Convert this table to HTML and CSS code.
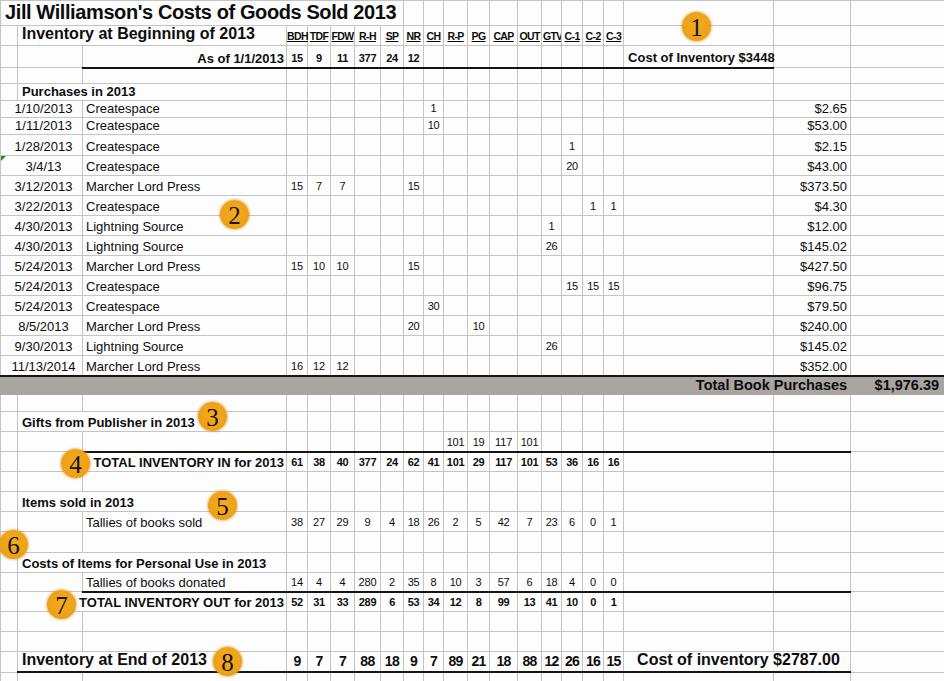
FILE: index.html
```html
<!DOCTYPE html>
<html>
<head>
<meta charset="utf-8">
<title>Jill Williamson's Costs of Goods Sold 2013</title>
<link rel="stylesheet" href="styles.css">
</head>
<body>
<div class="sheet">
<table class="grid">
<colgroup>
<col style="width:17px"><col style="width:65px"><col style="width:204px">
<col style="width:21px"><col style="width:23px"><col style="width:24px"><col style="width:26px"><col style="width:23px"><col style="width:20px"><col style="width:20px"><col style="width:24px"><col style="width:22px"><col style="width:28px"><col style="width:24px"><col style="width:20px"><col style="width:21px"><col style="width:21px"><col style="width:20px">
<col style="width:150px"><col style="width:77px"><col style="width:94px">
</colgroup>
<tbody>
<tr class="h25"><td colspan="8" class="title">Jill Williamson's Costs of Goods Sold 2013</td><td></td><td></td><td></td><td></td><td></td><td></td><td></td><td></td><td></td><td></td><td></td><td></td><td></td></tr>
<tr class="h20"><td></td><td colspan="2" class="big">Inventory at Beginning of 2013</td><td class="hd">BDH</td><td class="hd">TDF</td><td class="hd">FDW</td><td class="hd">R-H</td><td class="hd">SP</td><td class="hd">NR</td><td class="hd">CH</td><td class="hd">R-P</td><td class="hd">PG</td><td class="hd">CAP</td><td class="hd">OUT</td><td class="hd clip">GTV</td><td class="hd">C-1</td><td class="hd">C-2</td><td class="hd">C-3</td><td></td><td></td><td></td></tr>
<tr class="h22"><td></td><td></td><td class="lbl-r tb">As of 1/1/2013</td><td class="nb tb">15</td><td class="nb tb">9</td><td class="nb tb">11</td><td class="nb tb">377</td><td class="nb tb">24</td><td class="nb tb">12</td><td class="tb"></td><td class="tb"></td><td class="tb"></td><td class="tb"></td><td class="tb"></td><td class="tb"></td><td class="tb"></td><td class="tb"></td><td class="tb"></td><td class="costinv tb">Cost of Inventory $3448</td><td></td><td></td></tr>
<tr class="h16"><td></td><td></td><td></td><td></td><td></td><td></td><td></td><td></td><td></td><td></td><td></td><td></td><td></td><td></td><td></td><td></td><td></td><td></td><td></td><td></td><td></td></tr>
<tr class="h17"><td></td><td colspan="2" class="sec">Purchases in 2013</td><td></td><td></td><td></td><td></td><td></td><td></td><td></td><td></td><td></td><td></td><td></td><td></td><td></td><td></td><td></td><td></td><td></td><td></td></tr>
<tr class="h17"><td colspan="2" class="date">1/10/2013</td><td class="ven">Createspace</td><td></td><td></td><td></td><td></td><td></td><td></td><td class="n">1</td><td></td><td></td><td></td><td></td><td></td><td></td><td></td><td></td><td></td><td class="money">$2.65</td><td></td></tr>
<tr class="h17"><td colspan="2" class="date">1/11/2013</td><td class="ven">Createspace</td><td></td><td></td><td></td><td></td><td></td><td></td><td class="n">10</td><td></td><td></td><td></td><td></td><td></td><td></td><td></td><td></td><td></td><td class="money">$53.00</td><td></td></tr>
<tr class="h21"><td colspan="2" class="date">1/28/2013</td><td class="ven">Createspace</td><td></td><td></td><td></td><td></td><td></td><td></td><td></td><td></td><td></td><td></td><td></td><td></td><td class="n">1</td><td></td><td></td><td></td><td class="money">$2.15</td><td></td></tr>
<tr class="h20"><td colspan="2" class="date flag">3/4/13</td><td class="ven">Createspace</td><td></td><td></td><td></td><td></td><td></td><td></td><td></td><td></td><td></td><td></td><td></td><td></td><td class="n">20</td><td></td><td></td><td></td><td class="money">$43.00</td><td></td></tr>
<tr class="h20"><td colspan="2" class="date">3/12/2013</td><td class="ven">Marcher Lord Press</td><td class="n">15</td><td class="n">7</td><td class="n">7</td><td></td><td></td><td class="n">15</td><td></td><td></td><td></td><td></td><td></td><td></td><td></td><td></td><td></td><td></td><td class="money">$373.50</td><td></td></tr>
<tr class="h20"><td colspan="2" class="date">3/22/2013</td><td class="ven">Createspace</td><td></td><td></td><td></td><td></td><td></td><td></td><td></td><td></td><td></td><td></td><td></td><td></td><td></td><td class="n">1</td><td class="n">1</td><td></td><td class="money">$4.30</td><td></td></tr>
<tr class="h20"><td colspan="2" class="date">4/30/2013</td><td class="ven">Lightning Source</td><td></td><td></td><td></td><td></td><td></td><td></td><td></td><td></td><td></td><td></td><td></td><td class="n">1</td><td></td><td></td><td></td><td></td><td class="money">$12.00</td><td></td></tr>
<tr class="h20"><td colspan="2" class="date">4/30/2013</td><td class="ven">Lightning Source</td><td></td><td></td><td></td><td></td><td></td><td></td><td></td><td></td><td></td><td></td><td></td><td class="n">26</td><td></td><td></td><td></td><td></td><td class="money">$145.02</td><td></td></tr>
<tr class="h20"><td colspan="2" class="date">5/24/2013</td><td class="ven">Marcher Lord Press</td><td class="n">15</td><td class="n">10</td><td class="n">10</td><td></td><td></td><td class="n">15</td><td></td><td></td><td></td><td></td><td></td><td></td><td></td><td></td><td></td><td></td><td class="money">$427.50</td><td></td></tr>
<tr class="h20"><td colspan="2" class="date">5/24/2013</td><td class="ven">Createspace</td><td></td><td></td><td></td><td></td><td></td><td></td><td></td><td></td><td></td><td></td><td></td><td></td><td class="n">15</td><td class="n">15</td><td class="n">15</td><td></td><td class="money">$96.75</td><td></td></tr>
<tr class="h20"><td colspan="2" class="date">5/24/2013</td><td class="ven">Createspace</td><td></td><td></td><td></td><td></td><td></td><td></td><td class="n">30</td><td></td><td></td><td></td><td></td><td></td><td></td><td></td><td></td><td></td><td class="money">$79.50</td><td></td></tr>
<tr class="h20"><td colspan="2" class="date">8/5/2013</td><td class="ven">Marcher Lord Press</td><td></td><td></td><td></td><td></td><td></td><td class="n">20</td><td></td><td></td><td class="n">10</td><td></td><td></td><td></td><td></td><td></td><td></td><td></td><td class="money">$240.00</td><td></td></tr>
<tr class="h20"><td colspan="2" class="date">9/30/2013</td><td class="ven">Lightning Source</td><td></td><td></td><td></td><td></td><td></td><td></td><td></td><td></td><td></td><td></td><td></td><td class="n">26</td><td></td><td></td><td></td><td></td><td class="money">$145.02</td><td></td></tr>
<tr class="h20"><td colspan="2" class="date">11/13/2014</td><td class="ven">Marcher Lord Press</td><td class="n">16</td><td class="n">12</td><td class="n">12</td><td></td><td></td><td></td><td></td><td></td><td></td><td></td><td></td><td></td><td></td><td></td><td></td><td></td><td class="money">$352.00</td><td></td></tr>
<tr class="h19 band"><td colspan="18"></td><td colspan="2" class="tot">Total Book Purchases</td><td class="totv">$1,976.39</td></tr>
<tr class="h17"><td></td><td></td><td></td><td></td><td></td><td></td><td></td><td></td><td></td><td></td><td></td><td></td><td></td><td></td><td></td><td></td><td></td><td></td><td></td><td></td><td></td></tr>
<tr class="h20"><td></td><td colspan="2" class="sec">Gifts from Publisher in 2013</td><td></td><td></td><td></td><td></td><td></td><td></td><td></td><td></td><td></td><td></td><td></td><td></td><td></td><td></td><td></td><td></td><td></td><td></td></tr>
<tr class="h20"><td></td><td></td><td class="tb"></td><td class="tb"></td><td class="tb"></td><td class="tb"></td><td class="tb"></td><td class="tb"></td><td class="tb"></td><td class="tb"></td><td class="n tb">101</td><td class="n tb">19</td><td class="n tb">117</td><td class="n tb">101</td><td class="tb"></td><td class="tb"></td><td class="tb"></td><td class="tb"></td><td class="tb"></td><td class="tb"></td><td></td></tr>
<tr class="h20"><td></td><td></td><td class="lbl-r">TOTAL INVENTORY IN for 2013</td><td class="nb">61</td><td class="nb">38</td><td class="nb">40</td><td class="nb">377</td><td class="nb">24</td><td class="nb">62</td><td class="nb">41</td><td class="nb">101</td><td class="nb">29</td><td class="nb">117</td><td class="nb">101</td><td class="nb">53</td><td class="nb">36</td><td class="nb">16</td><td class="nb">16</td><td></td><td></td><td></td></tr>
<tr class="h20"><td></td><td></td><td></td><td></td><td></td><td></td><td></td><td></td><td></td><td></td><td></td><td></td><td></td><td></td><td></td><td></td><td></td><td></td><td></td><td></td><td></td></tr>
<tr class="h20"><td></td><td colspan="2" class="sec">Items sold in 2013</td><td></td><td></td><td></td><td></td><td></td><td></td><td></td><td></td><td></td><td></td><td></td><td></td><td></td><td></td><td></td><td></td><td></td><td></td></tr>
<tr class="h20"><td></td><td></td><td class="ven">Tallies of books sold</td><td class="n">38</td><td class="n">27</td><td class="n">29</td><td class="n">9</td><td class="n">4</td><td class="n">18</td><td class="n">26</td><td class="n">2</td><td class="n">5</td><td class="n">42</td><td class="n">7</td><td class="n">23</td><td class="n">6</td><td class="n">0</td><td class="n">1</td><td></td><td></td><td></td></tr>
<tr class="h21"><td></td><td></td><td></td><td></td><td></td><td></td><td></td><td></td><td></td><td></td><td></td><td></td><td></td><td></td><td></td><td></td><td></td><td></td><td></td><td></td><td></td></tr>
<tr class="h20"><td></td><td colspan="2" class="sec">Costs of Items for Personal Use in 2013</td><td></td><td></td><td></td><td></td><td></td><td></td><td></td><td></td><td></td><td></td><td></td><td></td><td></td><td></td><td></td><td></td><td></td><td></td></tr>
<tr class="h19"><td></td><td></td><td class="ven tb">Tallies of books donated</td><td class="n tb">14</td><td class="n tb">4</td><td class="n tb">4</td><td class="n tb">280</td><td class="n tb">2</td><td class="n tb">35</td><td class="n tb">8</td><td class="n tb">10</td><td class="n tb">3</td><td class="n tb">57</td><td class="n tb">6</td><td class="n tb">18</td><td class="n tb">4</td><td class="n tb">0</td><td class="n tb">0</td><td class="tb"></td><td class="tb"></td><td></td></tr>
<tr class="h20"><td></td><td colspan="2" class="lbl-r">TOTAL INVENTORY OUT for 2013</td><td class="nb">52</td><td class="nb">31</td><td class="nb">33</td><td class="nb">289</td><td class="nb">6</td><td class="nb">53</td><td class="nb">34</td><td class="nb">12</td><td class="nb">8</td><td class="nb">99</td><td class="nb">13</td><td class="nb">41</td><td class="nb">10</td><td class="nb">0</td><td class="nb">1</td><td></td><td></td><td></td></tr>
<tr class="h20"><td></td><td></td><td></td><td></td><td></td><td></td><td></td><td></td><td></td><td></td><td></td><td></td><td></td><td></td><td></td><td></td><td></td><td></td><td></td><td></td><td></td></tr>
<tr class="h20"><td></td><td></td><td></td><td></td><td></td><td></td><td></td><td></td><td></td><td></td><td></td><td></td><td></td><td></td><td></td><td></td><td></td><td></td><td></td><td></td><td></td></tr>
<tr class="h20"><td></td><td colspan="2" class="big tb">Inventory at End of 2013</td><td class="ne tb">9</td><td class="ne tb">7</td><td class="ne tb">7</td><td class="ne tb">88</td><td class="ne tb">18</td><td class="ne tb">9</td><td class="ne tb">7</td><td class="ne tb">89</td><td class="ne tb">21</td><td class="ne tb">18</td><td class="ne tb">88</td><td class="ne tb">12</td><td class="ne tb">26</td><td class="ne tb">16</td><td class="ne tb">15</td><td colspan="2" class="big costend tb">Cost of inventory $2787.00</td><td></td></tr>
<tr class="h20"><td></td><td></td><td></td><td></td><td></td><td></td><td></td><td></td><td></td><td></td><td></td><td></td><td></td><td></td><td></td><td></td><td></td><td></td><td></td><td></td><td></td></tr>
</tbody>
</table>

<span class="badge b1">1</span>
<span class="badge b2">2</span>
<span class="badge b3">3</span>
<span class="badge b4">4</span>
<span class="badge b5">5</span>
<span class="badge b6">6</span>
<span class="badge b7">7</span>
<span class="badge b8">8</span>
</div>
</body>
</html>
```

FILE: styles.css
```css
* { box-sizing: border-box; }
html, body { margin: 0; padding: 0; background: #fdfdfd; }
body { font-family: "Liberation Sans", Arial, sans-serif; color: #0d0d0d; }

.sheet { position: relative; width: 944px; height: 681px; overflow: hidden; }

.grid { border-collapse: collapse; table-layout: fixed; width: 944px; }
.grid td {
  border: 1px solid #c4c4c4;
  padding: 0 3px 2px 3px;
  vertical-align: bottom;
  white-space: nowrap;
  font-size: 13px;
  line-height: 1;
}

.h16 { height: 16px; }
.h17 { height: 17px; }
.h19 { height: 19px; }
.h20 { height: 20px; }
.h21 { height: 21px; }
.h22 { height: 22px; }
.h25 { height: 25px; }

.grid td.title { font-size: 20px; font-weight: bold; letter-spacing: -0.4px; padding-left: 4px; padding-bottom: 3px; }
.grid td.big { font-size: 16px; font-weight: bold; padding-left: 4px; padding-bottom: 3px; }
.grid td.sec { font-weight: bold; padding-left: 4px; }
.grid td.hd {
  font-size: 10.5px; font-weight: bold; text-decoration: underline;
  text-align: center; letter-spacing: -0.6px;
  padding: 0 0 4px 0;
}
.grid td.hd.clip { text-align: left; padding-left: 1px; overflow: hidden; letter-spacing: -0.8px; }
.grid td.lbl-r { text-align: right; font-weight: bold; padding-right: 2px; }
.grid td.costinv { font-weight: bold; padding-left: 4px; padding-bottom: 3px; }
.grid td.date { text-align: center; padding-left: 4px; padding-right: 0; position: relative; }
.grid td.flag::before {
  content: ""; position: absolute; left: 0; top: 0;
  border-top: 5px solid #2a8a2a; border-right: 5px solid transparent;
}
.grid td.ven { padding-left: 3px; }
.grid td.n { font-size: 11px; text-align: center; padding: 0 0 3px 0; letter-spacing: -0.2px; }
.grid td.nb { font-size: 11px; font-weight: bold; text-align: center; padding: 0 0 3px 0; letter-spacing: -0.3px; }
.grid td.ne { font-size: 14px; font-weight: bold; text-align: center; padding: 0 0 3px 0; letter-spacing: -0.6px; }
.grid td.money { text-align: right; padding-right: 3px; }
.grid td.costend { padding-left: 13px; }

.grid td.tb { border-bottom: 2px solid #151515; }

.band td { background: #a9a5a1; border-color: #a9a5a1; border-top: 2px solid #151515; }
.grid .band td.tot { font-size: 14.5px; font-weight: bold; text-align: right; padding-right: 3px; padding-bottom: 2px; }
.grid .band td.totv { font-size: 14.5px; font-weight: bold; text-align: right; padding-right: 5px; padding-bottom: 2px; }

.badge {
  position: absolute;
  width: 29px; height: 29px;
  border-radius: 50%;
  background: radial-gradient(circle at 50% 45%, #f4ab1f 0%, #eda219 60%, #d99110 100%);
  box-shadow: 0 0 2px 1px rgba(215, 150, 30, 0.55);
  display: flex; align-items: center; justify-content: center;
  font-family: "Liberation Serif", "DejaVu Serif", serif;
  font-size: 25px; line-height: 1; color: #1a1408;
  padding-top: 1px;
}
.b1 { left: 682px; top: 12px; }
.b2 { left: 220px; top: 200px; }
.b3 { left: 198px; top: 402px; }
.b4 { left: 61px; top: 449px; }
.b5 { left: 208px; top: 491px; }
.b6 { left: -1px; top: 530px; }
.b7 { left: 47px; top: 590px; }
.b8 { left: 213px; top: 647px; }
```
